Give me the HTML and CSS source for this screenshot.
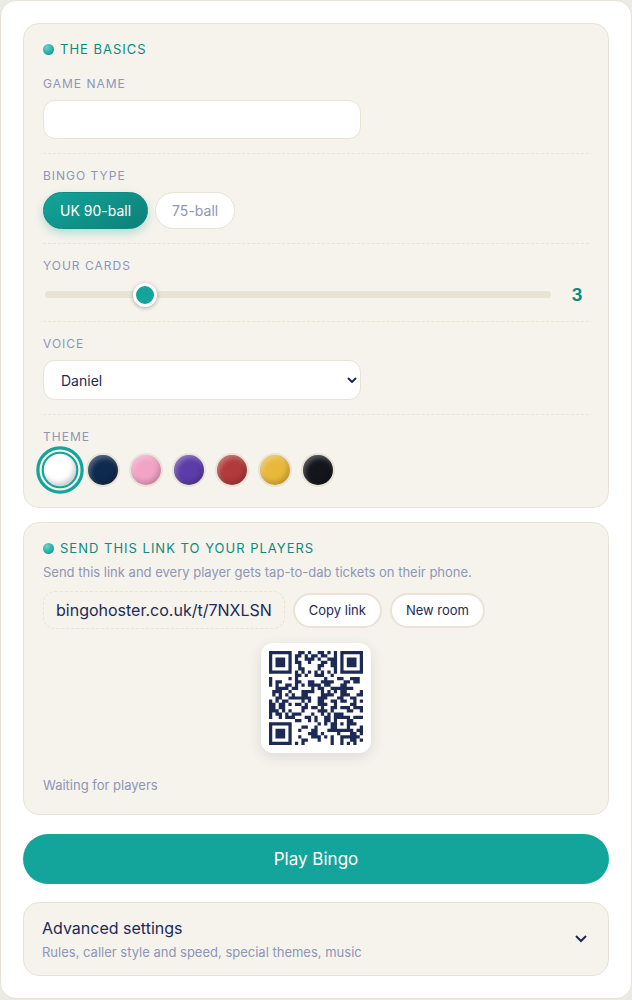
FILE: index.html
```html
<!DOCTYPE html>
<html lang="en">
<head>
    <meta charset="UTF-8">
    <meta name="viewport" content="width=device-width, initial-scale=1.0">
    <title>Bingo Hoster</title>
    <link rel="stylesheet" href="styles.css">
</head>
<body>
    <main class="setup">
        <section class="card">
            <h2 class="card-title">The basics</h2>

            <div class="field">
                <label class="field-label" for="game-name">Game name</label>
                <input class="text-input" type="text" id="game-name">
            </div>

            <div class="field">
                <span class="field-label" id="type-label">Bingo type</span>
                <div class="pills" role="group" aria-labelledby="type-label">
                    <button type="button" class="pill active" aria-pressed="true">UK 90-ball</button>
                    <button type="button" class="pill" aria-pressed="false">75-ball</button>
                </div>
            </div>

            <div class="field">
                <label class="field-label" for="cards">Your cards</label>
                <div class="slider-row">
                    <input class="slider" type="range" id="cards" min="1" max="12" value="3">
                    <output class="slider-value" id="cards-value" for="cards">3</output>
                </div>
            </div>

            <div class="field">
                <label class="field-label" for="voice">Voice</label>
                <div class="select-wrap">
                    <select class="text-input select" id="voice">
                        <option>Daniel</option>
                    </select>
                    <svg class="select-arrow" viewBox="0 0 10 6" aria-hidden="true"><path d="M1 1l4 4 4-4"/></svg>
                </div>
            </div>

            <div class="field">
                <span class="field-label" id="theme-label">Theme</span>
                <div class="swatches" role="radiogroup" aria-labelledby="theme-label">
                    <input type="radio" name="theme" class="swatch white" aria-label="White" checked>
                    <input type="radio" name="theme" class="swatch navy" aria-label="Navy">
                    <input type="radio" name="theme" class="swatch pink" aria-label="Pink">
                    <input type="radio" name="theme" class="swatch purple" aria-label="Purple">
                    <input type="radio" name="theme" class="swatch red" aria-label="Red">
                    <input type="radio" name="theme" class="swatch gold" aria-label="Gold">
                    <input type="radio" name="theme" class="swatch black" aria-label="Black">
                </div>
            </div>
        </section>

        <section class="card">
            <h2 class="card-title">Send this link to your players</h2>
            <p class="hint">Send this link and every player gets tap-to-dab tickets on their phone.</p>
            <div class="link-row">
                <span class="link" id="room-link">bingohoster.co.uk/t/7NXLSN</span>
                <button type="button" class="small-btn">Copy link</button>
                <button type="button" class="small-btn">New room</button>
            </div>
            <div class="qr" id="qr"></div>
            <p class="status">Waiting for players</p>
        </section>

        <button type="button" class="play-btn">Play Bingo</button>

        <details class="advanced">
            <summary class="advanced-head">
                <span class="advanced-text">
                    <span class="advanced-title">Advanced settings</span>
                    <span class="advanced-sub">Rules, caller style and speed, special themes, music</span>
                </span>
                <svg class="chevron" viewBox="0 0 12 8" aria-hidden="true"><path d="M1 1l5 5 5-5"/></svg>
            </summary>
        </details>
    </main>
    <script src="script.js"></script>
</body>
</html>
```
FILE: styles.css
```css
* {
    box-sizing: border-box;
}
body {
    margin: 0;
    background-color: #ebebe3;
    color: #1d2a55;
    font-family: Inter, "Liberation Sans", sans-serif;
    font-size: 14px;
}
button, input, select {
    font: inherit;
    color: inherit;
    margin: 0;
}
button {
    cursor: pointer;
}
.setup {
    background: #fff;
    border: 1px solid #e8e3d5;
    border-radius: 16px;
    padding: 22px;
}
.card {
    background: #f6f3ec;
    border: 1px solid #e8e3d5;
    border-radius: 16px;
    padding: 17px 19px 19px;
    margin-bottom: 14px;
}
.card-title {
    display: flex;
    align-items: center;
    gap: 6px;
    margin: 0 0 5px;
    font-size: 13px;
    font-weight: 400;
    line-height: 16px;
    letter-spacing: 1px;
    text-transform: uppercase;
    color: #0f8a80;
}
.card-title::before {
    content: "";
    width: 11px;
    height: 11px;
    border-radius: 50%;
    background: radial-gradient(circle at 35% 30%, #6fd3ca, #13a59b 70%);
}

/* form rows */
.field {
    padding: 13px 0 14px;
    border-bottom: 1px dashed #e8e3d5;
}
.field:last-child {
    padding-bottom: 1px;
    border-bottom: none;
}
.field-label {
    display: block;
    margin-bottom: 7px;
    font-size: 12px;
    line-height: 18px;
    letter-spacing: 1px;
    text-transform: uppercase;
    color: #8d96b8;
}
.text-input {
    display: block;
    width: 100%;
    max-width: 318px;
    height: 39px;
    padding: 0 17px;
    border: 1px solid #e8e3d5;
    border-radius: 12px;
    background: #fff;
}
.select-wrap {
    position: relative;
    max-width: 318px;
}
.select {
    appearance: none;
    height: 40px;
}
.select-arrow {
    position: absolute;
    right: 4px;
    top: 17px;
    width: 10px;
    height: 6px;
    pointer-events: none;
}
.select-arrow path, .chevron path {
    fill: none;
    stroke: #1d2a55;
    stroke-width: 2;
}
.pills {
    display: flex;
    gap: 7px;
}
.pill {
    height: 37px;
    padding: 0 16px;
    border: 1px solid #e8e3d5;
    border-radius: 19px;
    background: #fff;
    color: #8d96b8;
}
.pill.active {
    border-color: #0f8a80;
    background: linear-gradient(150deg, #13a59b, #0d7f77);
    color: #fff;
    box-shadow: 0 4px 10px rgba(19, 165, 155, 0.3);
}
.slider-row {
    display: flex;
    align-items: center;
    height: 25px;
}
.slider {
    flex: 1;
    min-width: 0;
    height: 24px;
    margin: 0 2px;
    appearance: none;
    background: transparent;
}
.slider::-webkit-slider-runnable-track {
    height: 7px;
    border-radius: 4px;
    background: #e8e3d5;
}
.slider::-webkit-slider-thumb {
    appearance: none;
    width: 24px;
    height: 24px;
    margin-top: -8px;
    border: 3px solid #fff;
    border-radius: 50%;
    background: #13a59b;
    box-shadow: 0 1px 4px rgba(0, 0, 0, 0.3);
}
.slider-value {
    width: 36px;
    padding-left: 12px;
    text-align: center;
    font-size: 17px;
    font-weight: 700;
    color: #0f8a80;
}
.swatches {
    display: flex;
    gap: 9px;
}
.swatch {
    appearance: none;
    width: 34px;
    height: 34px;
    border: 2px solid #e8e3d5;
    border-radius: 50%;
    box-shadow: inset -2px -3px 5px rgba(0, 0, 0, 0.2), inset 2px 3px 5px rgba(255, 255, 255, 0.3);
}
.swatch:checked {
    border-color: #13a59b;
    outline: 3px solid #13a59b;
    outline-offset: 2px;
    transform: scale(1.08);
}
.white { background: #fff; }
.navy { background: #0f2a4f; }
.pink { background: #f2a3c6; }
.purple { background: #5c3ca8; }
.red { background: #b03a3c; }
.gold { background: #e8b83a; }
.black { background: #14161c; }

/* link and qr */
.hint, .status {
    margin: 0;
    font-size: 13px;
    line-height: 20px;
    color: #8d96b8;
}
.hint {
    margin-top: 6px;
}
.link-row {
    display: flex;
    flex-wrap: wrap;
    align-items: center;
    gap: 8px;
    margin: 9px 0 14px;
}
.link {
    padding: 0 12px;
    border: 1px dashed #e8e3d5;
    border-radius: 12px;
    font-size: 16px;
    line-height: 36px;
}
.small-btn {
    height: 35px;
    padding: 0 14px;
    border: 2px solid #e8e3d5;
    border-radius: 18px;
    background: #fff;
    font-size: 13px;
}
.qr {
    width: 110px;
    height: 110px;
    margin: 0 auto 22px;
    padding: 8px;
    border-radius: 12px;
    background: #fff;
    box-shadow: 0 4px 14px rgba(29, 42, 85, 0.12);
}
.qr svg {
    display: block;
    fill: #1d2a55;
}
.play-btn {
    display: block;
    width: 100%;
    height: 50px;
    margin: 19px 0 18px;
    border: none;
    border-radius: 25px;
    background: #13a59b;
    color: #fff;
    font-size: 17px;
}
.advanced {
    background: #f6f3ec;
    border: 1px solid #e8e3d5;
    border-radius: 16px;
}
.advanced-head {
    display: flex;
    align-items: center;
    justify-content: space-between;
    padding: 13px 21px 13px 18px;
    list-style: none;
    cursor: pointer;
}
.advanced-title {
    display: block;
    font-size: 16px;
    line-height: 24px;
}
.advanced-sub {
    display: block;
    margin-top: 2px;
    font-size: 13px;
    line-height: 20px;
    color: #8d96b8;
}
.chevron {
    width: 12px;
    height: 8px;
}
```
FILE: script.js
```js
// Version 3, level M QR code: 29x29 modules, 44 data + 26 ecc codewords, one block
const SIZE = 29;
const DATA_LEN = 44;
const ECC_LEN = 26;
const MASK = 5;

function gfMul(a, b) {
    let p = 0;
    for (let i = 7; i >= 0; i--) {
        p = (p << 1) ^ ((p >> 7) * 0x11d);
        p ^= ((b >> i) & 1) * a;
    }
    return p;
}

function getEcc(data) {
    const gen = new Array(ECC_LEN).fill(0);
    gen[ECC_LEN - 1] = 1;
    let root = 1;
    for (let i = 0; i < ECC_LEN; i++) {
        for (let j = 0; j < ECC_LEN; j++) {
            gen[j] = gfMul(gen[j], root);
            if (j + 1 < ECC_LEN) gen[j] ^= gen[j + 1];
        }
        root = gfMul(root, 2);
    }
    const rem = new Array(ECC_LEN).fill(0);
    data.forEach(byte => {
        const factor = byte ^ rem.shift();
        rem.push(0);
        gen.forEach((g, i) => { rem[i] ^= gfMul(g, factor); });
    });
    return rem;
}

function getCodewords(text) {
    let bits = '0100' + text.length.toString(2).padStart(8, '0');
    for (const ch of text) {
        bits += ch.charCodeAt(0).toString(2).padStart(8, '0');
    }
    bits += '0000';
    const data = [];
    for (let i = 0; i < bits.length; i += 8) {
        data.push(parseInt(bits.slice(i, i + 8), 2));
    }
    for (let pad = 0xec; data.length < DATA_LEN; pad ^= 0xec ^ 0x11) {
        data.push(pad);
    }
    return data.concat(getEcc(data));
}

function buildMatrix(words) {
    const grid = Array.from({ length: SIZE }, () => new Array(SIZE).fill(null));
    const finder = (row, col) => {
        for (let r = -4; r <= 4; r++) {
            for (let c = -4; c <= 4; c++) {
                const y = row + r, x = col + c;
                if (y < 0 || x < 0 || y >= SIZE || x >= SIZE) continue;
                const d = Math.max(Math.abs(r), Math.abs(c));
                grid[y][x] = d !== 2 && d !== 4;
            }
        }
    };
    finder(3, 3);
    finder(3, SIZE - 4);
    finder(SIZE - 4, 3);
    for (let r = -2; r <= 2; r++) {
        for (let c = -2; c <= 2; c++) {
            grid[22 + r][22 + c] = Math.max(Math.abs(r), Math.abs(c)) !== 1;
        }
    }
    for (let i = 8; i < SIZE - 8; i++) {
        grid[6][i] = grid[i][6] = i % 2 === 0;
    }

    // format bits (level M is 00)
    let rem = MASK;
    for (let i = 0; i < 10; i++) rem = (rem << 1) ^ ((rem >> 9) * 0x537);
    const format = (MASK << 10 | rem) ^ 0x5412;
    const bit = i => ((format >> i) & 1) === 1;
    for (let i = 0; i <= 5; i++) grid[i][8] = bit(i);
    grid[7][8] = bit(6);
    grid[8][8] = bit(7);
    grid[8][7] = bit(8);
    for (let i = 9; i < 15; i++) grid[8][14 - i] = bit(i);
    for (let i = 0; i < 8; i++) grid[8][SIZE - 1 - i] = bit(i);
    for (let i = 8; i < 15; i++) grid[SIZE - 15 + i][8] = bit(i);
    grid[SIZE - 8][8] = true;

    // data, two columns at a time, up then down
    let n = 0;
    for (let right = SIZE - 1; right >= 1; right -= 2) {
        if (right === 6) right = 5;
        for (let v = 0; v < SIZE; v++) {
            for (let j = 0; j < 2; j++) {
                const x = right - j;
                const up = ((right + 1) & 2) === 0;
                const y = up ? SIZE - 1 - v : v;
                if (grid[y][x] !== null) continue;
                const dark = n < words.length * 8 && ((words[n >> 3] >> (7 - (n & 7))) & 1) === 1;
                grid[y][x] = dark !== ((x * y) % 6 === 0);
                n++;
            }
        }
    }
    return grid;
}

function drawQr(el, text) {
    let path = '';
    buildMatrix(getCodewords(text)).forEach((row, y) => row.forEach((dark, x) => {
        if (dark) path += `M${x} ${y}h1v1h-1z`;
    }));
    el.innerHTML = `<svg viewBox="0 0 ${SIZE} ${SIZE}" role="img" aria-label="QR code for the room link"><path d="${path}"/></svg>`;
}

drawQr(document.getElementById('qr'), 'https://' + document.getElementById('room-link').textContent);

const cards = document.getElementById('cards');
cards.addEventListener('input', () => {
    document.getElementById('cards-value').textContent = cards.value;
});
```
